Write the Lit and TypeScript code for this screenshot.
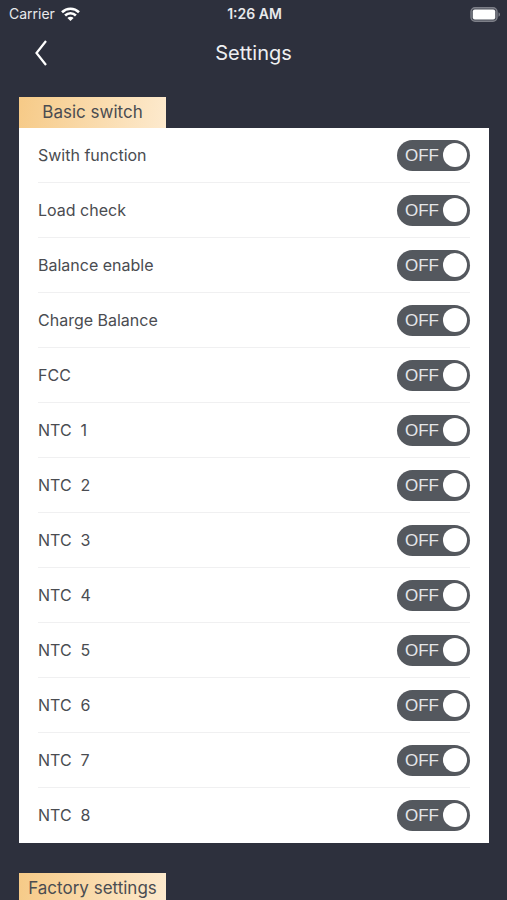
import { LitElement, html, css } from "lit";
import { customElement, property, state } from "lit/decorators.js";

@customElement("toggle-row")
class ToggleRow extends LitElement {
  @property() label = "";
  @property({ type: Boolean }) on = false;

  static styles = css`
    :host {
      display: block;
      border-bottom: 1px solid #f0f0f1;
    }
    :host(:last-of-type) {
      border-bottom-color: transparent;
    }
    .row {
      display: flex;
      align-items: center;
      justify-content: space-between;
      height: 54px;
      cursor: pointer;
    }
    .name {
      white-space: pre;
    }
    .switch {
      box-sizing: border-box;
      position: relative;
      display: flex;
      align-items: center;
      justify-content: space-between;
      width: 73px;
      height: 31px;
      padding: 0 3px 0 8px;
      border-radius: 16px;
      background: #54585e;
    }
    .switch.on {
      flex-direction: row-reverse;
      padding: 0 8px 0 3px;
      background: #e0b26c;
    }
    .box {
      position: absolute;
      inset: 0;
      width: 100%;
      height: 100%;
      margin: 0;
      opacity: 0;
      cursor: pointer;
    }
    .word {
      font: 17px/31px "Liberation Sans", Arial, sans-serif;
      color: #e4e6e9;
    }
    .knob {
      width: 24px;
      height: 24px;
      border-radius: 50%;
      background: #fff;
    }
  `;

  private toggle(e: Event) {
    this.on = (e.target as HTMLInputElement).checked;
  }

  render() {
    return html`
      <label class="row">
        <span class="name">${this.label}</span>
        <span class="switch ${this.on ? "on" : ""}">
          <input class="box" type="checkbox" .checked=${this.on} @change=${this.toggle} />
          <span class="word" aria-hidden="true">${this.on ? "ON" : "OFF"}</span>
          <span class="knob"></span>
        </span>
      </label>
    `;
  }
}

@customElement("app-root")
class AppRoot extends LitElement {
  @state() private items = [
    "Swith function",
    "Load check",
    "Balance enable",
    "Charge Balance",
    "FCC",
    ...[1, 2, 3, 4, 5, 6, 7, 8].map((n) => `NTC  ${n}`),
  ];

  static styles = css`
    :host {
      display: flex;
      flex-direction: column;
      height: 100vh;
      background: #2d303d;
      color: #4a4c51;
      font: 16px/20px Inter, "Liberation Sans", sans-serif;
    }
    .status {
      display: grid;
      grid-template-columns: 1fr auto 1fr;
      align-items: center;
      height: 28px;
      padding: 0 7px 0 9px;
      font-size: 14px;
      color: #e8e9ec;
    }
    .carrier {
      display: flex;
      align-items: center;
      gap: 6px;
    }
    .time {
      font-weight: 600;
    }
    .battery {
      justify-self: end;
    }
    svg {
      display: block;
    }
    .bar {
      display: grid;
      grid-template-columns: 44px 1fr 44px;
      align-items: center;
      height: 50px;
      padding: 0 19px;
    }
    .back {
      display: flex;
      align-items: center;
      justify-content: center;
      height: 44px;
      padding: 0;
      border: 0;
      background: none;
      color: #fff;
      cursor: pointer;
    }
    h1 {
      margin: 0;
      font-size: 20px;
      line-height: 24px;
      font-weight: 400;
      text-align: center;
      color: #eeeff2;
    }
    main {
      flex: 1;
      min-height: 0;
      overflow-y: auto;
      scrollbar-width: none;
      padding: 19px 18px 0 19px;
    }
    section {
      margin-bottom: 30px;
    }
    h2 {
      width: 147px;
      margin: 0;
      font-size: 17px;
      line-height: 31px;
      font-weight: 400;
      text-align: center;
      background: linear-gradient(100deg, #f6ca87, #fdeace);
    }
    .card {
      padding: 0 19px;
      background: #fff;
    }
  `;

  render() {
    return html`
      <div class="status">
        <span class="carrier">
          Carrier
          <svg width="19" height="14" viewBox="0 0 19 14" fill="none" stroke="#fff" stroke-width="2.6">
            <path d="M1 5.200a12.200 12.200 0 0 1 17 0" />
            <path d="M4.100 8.500a7.700 7.700 0 0 1 10.800 0" />
            <path d="M9.500 14 6.400 11a4.400 4.400 0 0 1 6.200 0z" fill="#fff" stroke="none" />
          </svg>
        </span>
        <span class="time">1:26 AM</span>
        <svg class="battery" width="30" height="15" viewBox="0 0 30 15">
          <rect x="1" y=".8" width="26" height="13.400" rx="4" fill="#4b4e59" stroke="#7d7f88" stroke-width="1.400" />
          <rect x="2.800" y="2.600" width="22.400" height="9.800" rx="2" fill="#fff" />
          <path d="M28.500 5.300c2 .8 2 3.600 0 4.400z" fill="#7d7f88" />
        </svg>
      </div>
      <header class="bar">
        <button class="back" type="button" aria-label="Back">
          <svg width="12" height="26" viewBox="0 0 12 26" fill="none" stroke="currentColor" stroke-width="2.200">
            <path d="M11 1 1.500 13 11 25" />
          </svg>
        </button>
        <h1>Settings</h1>
      </header>
      <main>
        <section>
          <h2>Basic switch</h2>
          <div class="card">
            ${this.items.map((name) => html`<toggle-row .label=${name}></toggle-row>`)}
          </div>
        </section>
        <section>
          <h2>Factory settings</h2>
        </section>
      </main>
    `;
  }
}
